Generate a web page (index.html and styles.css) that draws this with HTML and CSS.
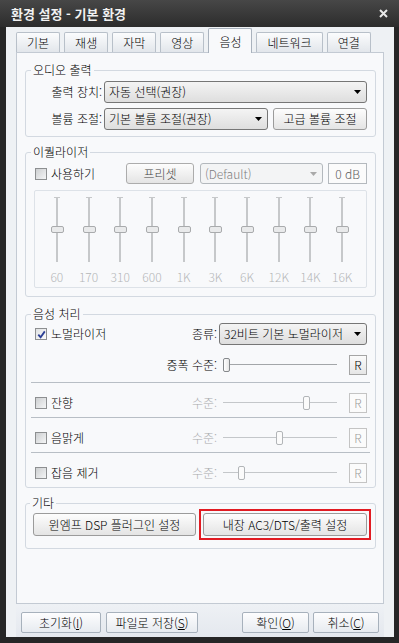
FILE: index.html
```html
<!DOCTYPE html>
<html lang="ko">
<head>
    <meta charset="UTF-8">
    <title>환경 설정 - 기본 환경</title>
    <link rel="stylesheet" href="styles.css">
</head>
<body>
<div class="window">
    <div class="titlebar">
        <span class="title">환경 설정 - 기본 환경</span>
        <svg class="close" width="9" height="9" viewBox="0 0 9 9"><path d="M1 1L8 8M8 1L1 8" stroke="#e8e8e8" stroke-width="2"/></svg>
    </div>

    <div class="client">
        <div class="tabs">
            <div class="tab">기본</div>
            <div class="tab">재생</div>
            <div class="tab">자막</div>
            <div class="tab">영상</div>
            <div class="tab active">음성</div>
            <div class="tab">네트워크</div>
            <div class="tab">연결</div>
        </div>

        <div class="panel">
            <!-- 오디오 출력 -->
            <fieldset class="group group-output">
                <legend>오디오 출력</legend>
                <div class="field-row">
                    <span class="field-label">출력 장치:</span>
                    <div class="combo grow">
                        <span class="combo-text">자동 선택(권장)</span>
                        <svg class="arrow" width="7" height="4" viewBox="0 0 7 4"><path d="M0 0H7L3.5 4Z"/></svg>
                    </div>
                </div>
                <div class="field-row">
                    <span class="field-label">볼륨 조절:</span>
                    <div class="combo grow">
                        <span class="combo-text">기본 볼륨 조절(권장)</span>
                        <svg class="arrow" width="7" height="4" viewBox="0 0 7 4"><path d="M0 0H7L3.5 4Z"/></svg>
                    </div>
                    <button class="btn btn-adv">고급 볼륨 조절</button>
                </div>
            </fieldset>

            <!-- 이퀄라이저 -->
            <fieldset class="group group-eq">
                <legend>이퀄라이저</legend>
                <div class="eq-top">
                    <label class="check"><span class="box"></span>사용하기</label>
                    <button class="btn btn-preset">프리셋</button>
                    <div class="combo combo-disabled combo-preset">
                        <span class="combo-text">(Default)</span>
                        <svg class="arrow" width="7" height="4" viewBox="0 0 7 4"><path d="M0 0H7L3.5 4Z"/></svg>
                    </div>
                    <div class="db-box">0 dB</div>
                </div>
                <div class="eq-panel">
                    <div class="eq-band"><div class="eq-track"><span class="eq-thumb"></span></div><span class="eq-label">60</span></div>
                    <div class="eq-band"><div class="eq-track"><span class="eq-thumb"></span></div><span class="eq-label">170</span></div>
                    <div class="eq-band"><div class="eq-track"><span class="eq-thumb"></span></div><span class="eq-label">310</span></div>
                    <div class="eq-band"><div class="eq-track"><span class="eq-thumb"></span></div><span class="eq-label">600</span></div>
                    <div class="eq-band"><div class="eq-track"><span class="eq-thumb"></span></div><span class="eq-label">1K</span></div>
                    <div class="eq-band"><div class="eq-track"><span class="eq-thumb"></span></div><span class="eq-label">3K</span></div>
                    <div class="eq-band"><div class="eq-track"><span class="eq-thumb"></span></div><span class="eq-label">6K</span></div>
                    <div class="eq-band"><div class="eq-track"><span class="eq-thumb"></span></div><span class="eq-label">12K</span></div>
                    <div class="eq-band"><div class="eq-track"><span class="eq-thumb"></span></div><span class="eq-label">14K</span></div>
                    <div class="eq-band"><div class="eq-track"><span class="eq-thumb"></span></div><span class="eq-label">16K</span></div>
                </div>
            </fieldset>

            <!-- 음성 처리 -->
            <fieldset class="group group-proc">
                <legend>음성 처리</legend>
                <div class="proc-row">
                    <label class="check lead"><span class="box checked"><svg width="9" height="9" viewBox="0 0 9 9"><path d="M1.3 4.6L3.6 7.2L7.8 1.4" fill="none" stroke="#2b3f95" stroke-width="1.8"/></svg></span>노멀라이저</label>
                    <span class="lvl">종류:</span>
                    <div class="combo combo-norm">
                        <span class="combo-text">32비트 기본 노멀라이저</span>
                        <svg class="arrow" width="7" height="4" viewBox="0 0 7 4"><path d="M0 0H7L3.5 4Z"/></svg>
                    </div>
                </div>
                <div class="proc-row row-amp">
                    <span class="lead"></span>
                    <span class="lvl">증폭 수준:</span>
                    <div class="ctrl">
                        <div class="hslider"><span class="hthumb" style="left: 0px"></span></div>
                        <button class="btn-r">R</button>
                    </div>
                </div>
                <div class="proc-sec">
                    <div class="proc-row">
                        <label class="check lead"><span class="box"></span>잔향</label>
                        <span class="lvl off">수준:</span>
                        <div class="ctrl">
                            <div class="hslider off"><span class="hthumb" style="left: 80px"></span></div>
                            <button class="btn-r off">R</button>
                        </div>
                    </div>
                </div>
                <div class="proc-sec">
                    <div class="proc-row">
                        <label class="check lead"><span class="box"></span>음맑게</label>
                        <span class="lvl off">수준:</span>
                        <div class="ctrl">
                            <div class="hslider off"><span class="hthumb" style="left: 53px"></span></div>
                            <button class="btn-r off">R</button>
                        </div>
                    </div>
                </div>
                <div class="proc-sec">
                    <div class="proc-row">
                        <label class="check lead"><span class="box"></span>잡음 제거</label>
                        <span class="lvl off">수준:</span>
                        <div class="ctrl">
                            <div class="hslider off"><span class="hthumb" style="left: 15px"></span></div>
                            <button class="btn-r off">R</button>
                        </div>
                    </div>
                </div>
            </fieldset>

            <!-- 기타 -->
            <fieldset class="group group-etc">
                <legend>기타</legend>
                <div class="etc-row">
                    <button class="btn btn-wide">윈엠프 DSP 플러그인 설정</button>
                    <span class="highlight">
                        <button class="btn btn-wide">내장 AC3/DTS/출력 설정</button>
                    </span>
                </div>
            </fieldset>
        </div>

        <div class="bottom-bar">
            <button class="btn-dlg btn-reset">초기화(<u>I</u>)</button>
            <button class="btn-dlg btn-save">파일로 저장(<u>S</u>)</button>
            <button class="btn-dlg btn-ok">확인(<u>O</u>)</button>
            <button class="btn-dlg btn-cancel">취소(<u>C</u>)</button>
        </div>
    </div>
</div>
</body>
</html>
```

FILE: styles.css
```css
* {
    box-sizing: border-box;
}

body {
    margin: 0;
    background: #1c1c1c;
    font-family: "Noto Sans CJK KR", "Noto Sans", sans-serif;
    font-size: 12px;
    font-weight: 300;
    color: #000;
}

button {
    font-family: inherit;
    font-size: 12px;
    font-weight: inherit;
    color: #000;
    padding: 0;
}

.window {
    width: 399px;
    height: 643px;
    background: #262626;
    display: flex;
    flex-direction: column;
}

/* title bar */
.titlebar {
    height: 27px;
    flex: none;
    display: flex;
    align-items: center;
    justify-content: space-between;
    padding: 0 11px 0 11px;
    background: linear-gradient(#474747, #2c2c2c);
}

.title {
    color: #f2f2f2;
    font-size: 13px;
    font-weight: bold;
    line-height: 16px;
}

/* client area */
.client {
    flex: 1;
    margin: 0 5px 6px 6px;
    background: #eef1f4;
    display: flex;
    flex-direction: column;
    padding: 0 10px;
}

.tabs {
    height: 25px;
    flex: none;
    display: flex;
    align-items: flex-end;
    gap: 4px;
}

.tab {
    height: 20px;
    padding: 0 10px;
    line-height: 19px;
    border: 1px solid #b8c0c9;
    border-bottom: none;
    border-radius: 2px 2px 0 0;
    background: linear-gradient(#fbfcfd, #e2e6eb);
}

.tab.active {
    height: 25px;
    padding-top: 3px;
    margin-bottom: -1px;
    background: #f8f9fb;
    border-color: #a9b2bd;
    position: relative;
    z-index: 1;
}

.panel {
    height: 552px;
    flex: none;
    border: 1px solid #c3cad3;
    background: #f8f9fb;
    padding: 10px 7px 0 8px;
}

/* group boxes */
.group {
    margin: 0;
    min-width: 0;
    border: 1px solid #d3d9e1;
    border-radius: 3px;
    padding: 4px 8px 6px 8px;
}

.group legend {
    padding: 0 2px;
    margin-left: -3px;
    line-height: 14px;
}

.group-eq {
    margin-top: 8px;
    padding-bottom: 8px;
}

.group-proc {
    margin-top: 10px;
    padding-top: 2px;
    padding-bottom: 0;
}

.group-etc {
    margin-top: 8px;
    padding: 3px 8px 12px 7px;
}

/* form controls */
.field-row {
    display: flex;
    align-items: center;
    gap: 2px;
}

.field-row + .field-row {
    margin-top: 5px;
}

.field-label {
    width: 68px;
    text-align: right;
    line-height: 16px;
}

.grow {
    flex: 1;
}

.combo {
    height: 22px;
    display: flex;
    align-items: center;
    justify-content: space-between;
    padding: 0 5px 0 4px;
    border: 1px solid #767676;
    border-radius: 3px;
    background: linear-gradient(#f4f4f4, #dedede);
    overflow: hidden;
}

.combo-text {
    white-space: nowrap;
    line-height: 16px;
}

.combo-norm .combo-text {
    overflow: hidden;
}

.arrow {
    flex: none;
    margin-left: 4px;
}

.combo-disabled {
    background: #f3f4f5;
    border-color: #b3b8bd;
    color: #7e7e7e;
}

.combo-disabled .arrow {
    fill: #a9a9a9;
}

.btn {
    height: 22px;
    border: 1px solid #9b9b9b;
    border-radius: 3px;
    background: linear-gradient(#fdfdfd, #e4e4e4);
    line-height: 16px;
}

.btn-adv {
    width: 94px;
    margin-left: 3px;
}

/* checkbox */
.check {
    display: flex;
    align-items: center;
    line-height: 16px;
}

.box {
    width: 12px;
    height: 12px;
    margin: 0 4px 0 1px;
    border: 1px solid #8d8f91;
    background: linear-gradient(135deg, #cdcfd1, #f4f5f6);
    display: flex;
    align-items: center;
    justify-content: center;
}

.box.checked {
    background: linear-gradient(135deg, #dfe1e3, #fbfbfb);
}

/* equalizer */
.eq-top {
    display: flex;
    align-items: center;
    height: 21px;
}

.btn-preset {
    margin-left: auto;
    width: 68px;
    height: 21px;
    color: #444;
    border-color: #acacac;
}

.combo-preset {
    width: 123px;
    height: 21px;
    margin-left: 6px;
}

.db-box {
    width: 39px;
    height: 21px;
    margin-left: 5px;
    border: 1px solid #b4b9be;
    background: #fbfbfb;
    color: #5e5e5e;
    text-align: center;
    line-height: 19px;
}

.eq-panel {
    margin-top: 6px;
    height: 98px;
    border: 1px solid #dde2e8;
    border-radius: 2px;
    padding: 6px 8px 0 6px;
    display: grid;
    grid-template-columns: repeat(10, 1fr);
}

.eq-band {
    display: flex;
    flex-direction: column;
    align-items: center;
}

.eq-track {
    position: relative;
    width: 2px;
    height: 65px;
    background: #c6c8ca;
}

.eq-track::before {
    content: "";
    position: absolute;
    top: 0;
    left: -2px;
    width: 6px;
    height: 1px;
    background: #c6c8ca;
}

.eq-thumb {
    position: absolute;
    top: 50%;
    left: 50%;
    width: 13px;
    height: 7px;
    margin: -4px 0 0 -6px;
    border: 1px solid #a9abad;
    border-radius: 2px;
    background: #e9eaeb;
}

.eq-label {
    margin-top: 7px;
    line-height: 16px;
    color: #b4b6b8;
}

/* sound processing */
.proc-row {
    display: flex;
    align-items: center;
    height: 22px;
}

.row-amp {
    height: 20px;
    margin-top: 10px;
}

.proc-sec {
    margin: 0 -3px;
    padding: 9px 3px 4px;
    border-top: 1px solid #b8bec5;
}

.proc-sec .proc-row {
    height: 21px;
}

.row-amp + .proc-sec {
    margin-top: 7px;
}

.lead {
    flex: 1;
}

.lvl {
    line-height: 16px;
}

.lvl.off {
    color: #a9abad;
}

.combo-norm {
    width: 148px;
    margin-left: 2px;
}

.ctrl {
    width: 148px;
    margin-left: 2px;
    display: flex;
    align-items: center;
}

.hslider {
    position: relative;
    width: 114px;
    height: 14px;
    margin-left: 4px;
}

.hslider::before {
    content: "";
    position: absolute;
    left: 0;
    right: 0;
    top: 6px;
    height: 1px;
    background: #a3a6a9;
}

.hthumb {
    position: absolute;
    top: 0;
    width: 7px;
    height: 14px;
    border: 1px solid #85888b;
    border-radius: 2px;
    background: linear-gradient(90deg, #ffffff, #e6e6e6);
}

.hslider.off::before {
    background: #c4c7ca;
}

.hslider.off .hthumb {
    border-color: #b2b5b8;
    background: #fbfbfb;
}

.btn-r {
    margin-left: auto;
    width: 18px;
    height: 20px;
    border: 1px solid #a5a5a5;
    background: linear-gradient(#fbfbfb, #e6e6e6);
    line-height: 16px;
}

.btn-r.off {
    color: #9c9c9c;
    border-color: #c4c4c4;
    background: #fbfbfb;
}

/* etc */
.etc-row {
    display: flex;
}

.btn-wide {
    width: 164px;
    height: 23px;
}

.highlight {
    display: flex;
    margin: -4px -4px -4px 3px;
    padding: 2px;
    border: 2px solid #e11b22;
}

/* dialog buttons */
.bottom-bar {
    flex: 1;
    display: flex;
    align-items: flex-start;
    padding: 8px 5px 0;
    background: linear-gradient(#eef1f5, #e4e8ee);
}

.btn-dlg {
    height: 21px;
    border: 1px solid #a7b1bc;
    border-radius: 2px;
    background: linear-gradient(#fdfdfe, #e7ebf0);
    line-height: 16px;
}

.btn-reset {
    width: 80px;
}

.btn-save {
    width: 92px;
    margin-left: 5px;
}

.btn-ok {
    width: 67px;
    margin-left: auto;
}

.btn-cancel {
    width: 66px;
    margin-left: 4px;
}
```
